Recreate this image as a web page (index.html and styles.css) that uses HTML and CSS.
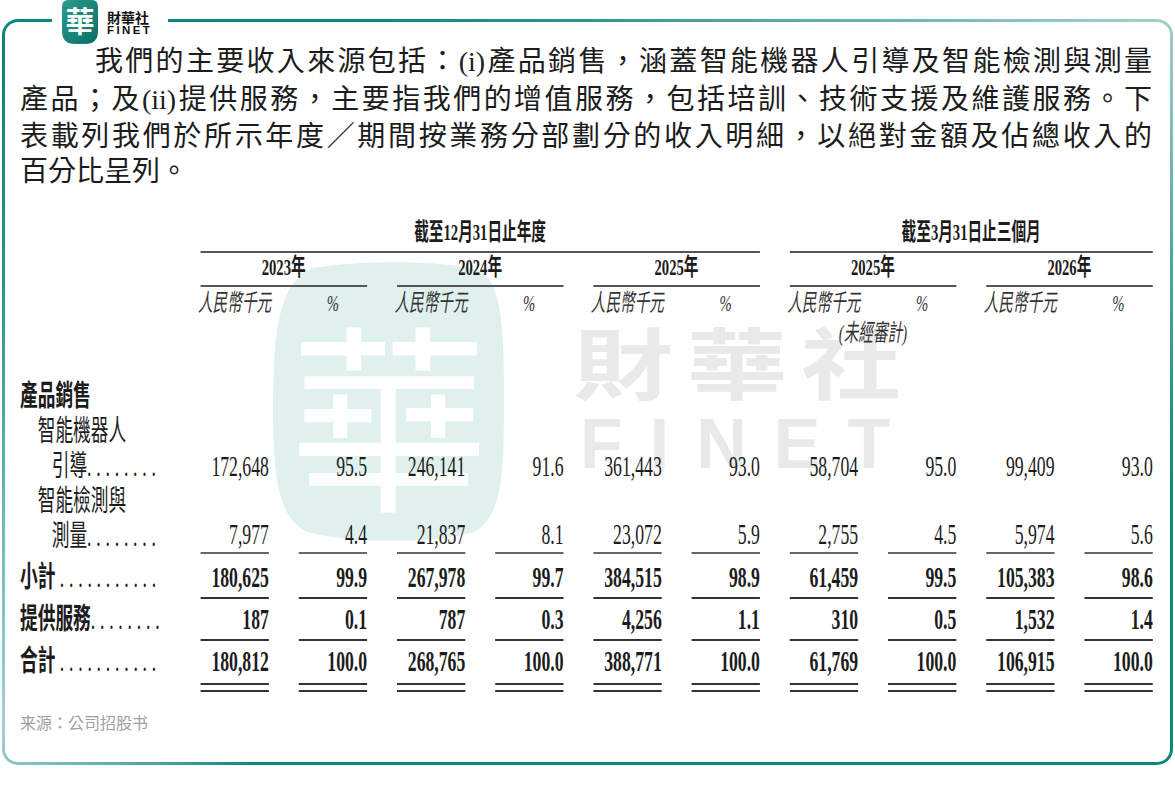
FILE: index.html
```html
<!DOCTYPE html>
<html lang="zh-Hant">
<head>
<meta charset="utf-8">
<title>收入明細</title>
<link rel="stylesheet" href="styles.css">
</head>
<body>
<div class="card">
  <div class="logo">
    <svg class="logo-mark" width="36" height="44" viewBox="0 0 36 44">
      <defs>
        <linearGradient id="lgm" x1="0" y1="0" x2="1" y2="1">
          <stop offset="0" stop-color="#2b9c90"/>
          <stop offset="1" stop-color="#0c6e65"/>
        </linearGradient>
      </defs>
      <path d="M6 0 H30 Q36 0 36 7 V31 Q36 44 23 44 H13 Q0 44 0 31 V7 Q0 0 6 0 Z" fill="url(#lgm)"/>
      <text x="18" y="33" text-anchor="middle" class="logo-glyph">華</text>
    </svg>
    <div class="logo-text">
      <span class="logo-cn">財華社</span>
      <span class="logo-en">FINET</span>
    </div>
  </div>

  <div class="wm-blob">
    <svg width="232" height="284" viewBox="0 0 232 284">
      <path d="M40 6 C90 -2 170 -2 205 8 C228 20 231 60 231 140 C231 215 228 250 205 268 C175 282 75 282 35 270 C8 258 0 225 0 150 C0 70 5 20 40 6 Z" fill="#dff0ee"/>
      <text x="116" y="234" text-anchor="middle" class="wm-glyph">華</text>
    </svg>
  </div>
  <div class="wm-cn">財華社</div>
  <div class="wm-en">FINET</div>

  <div class="intro">
    <span class="ln first">我們的主要收入來源包括：<span class="lat">(i)</span>產品銷售，涵蓋智能機器人引導及智能檢測與測量</span>
    <span class="ln">產品；及<span class="lat">(ii)</span>提供服務，主要指我們的增值服務，包括培訓、技術支援及維護服務。下</span>
    <span class="ln">表載列我們於所示年度／期間按業務分部劃分的收入明細，以絕對金額及佔總收入的</span>
    <span class="ln last">百分比呈列。</span>
  </div>

  <div class="table-wrap">
    <div class="table">
      <div class="row grp">
        <div class="h g1">截至12月31日止年度</div>
        <div class="h g2">截至3月31日止三個月</div>
      </div>
      <div class="row yrs">
        <div class="y y1">2023年</div>
        <div class="y">2024年</div>
        <div class="y">2025年</div>
        <div class="y">2025年</div>
        <div class="y">2026年</div>
      </div>
      <div class="row units">
        <div class="u u1"><span>人民幣千元</span></div><div class="u"><span>%</span></div>
        <div class="u"><span>人民幣千元</span></div><div class="u"><span>%</span></div>
        <div class="u"><span>人民幣千元</span></div><div class="u"><span>%</span></div>
        <div class="u"><span>人民幣千元</span></div><div class="u"><span>%</span></div>
        <div class="u"><span>人民幣千元</span></div><div class="u"><span>%</span></div>
      </div>
      <div class="row note">
        <div class="n">(未經審計)</div>
      </div>

      <div class="section">
        <div class="row">
          <div class="lbl b">產品銷售</div>
        </div>
        <div class="row item">
          <div class="lbl"><span class="l1">智能機器人</span><span class="l2">引導<span class="dots">........</span></span></div>
          <div class="num">172,648</div><div class="num">95.5</div>
          <div class="num">246,141</div><div class="num">91.6</div>
          <div class="num">361,443</div><div class="num">93.0</div>
          <div class="num">58,704</div><div class="num">95.0</div>
          <div class="num">99,409</div><div class="num">93.0</div>
        </div>
        <div class="row item last">
          <div class="lbl"><span class="l1">智能檢測與</span><span class="l2">測量<span class="dots">........</span></span></div>
          <div class="num">7,977</div><div class="num">4.4</div>
          <div class="num">21,837</div><div class="num">8.1</div>
          <div class="num">23,072</div><div class="num">5.9</div>
          <div class="num">2,755</div><div class="num">4.5</div>
          <div class="num">5,974</div><div class="num">5.6</div>
        </div>
        <div class="row tot sub">
          <div class="lbl b">小計 <span class="dots">...........</span></div>
          <div class="num">180,625</div><div class="num">99.9</div>
          <div class="num">267,978</div><div class="num">99.7</div>
          <div class="num">384,515</div><div class="num">98.9</div>
          <div class="num">61,459</div><div class="num">99.5</div>
          <div class="num">105,383</div><div class="num">98.6</div>
        </div>
        <div class="row tot">
          <div class="lbl b">提供服務<span class="dots">........</span></div>
          <div class="num">187</div><div class="num">0.1</div>
          <div class="num">787</div><div class="num">0.3</div>
          <div class="num">4,256</div><div class="num">1.1</div>
          <div class="num">310</div><div class="num">0.5</div>
          <div class="num">1,532</div><div class="num">1.4</div>
        </div>
        <div class="row tot grand">
          <div class="lbl b">合計 <span class="dots">...........</span></div>
          <div class="num">180,812</div><div class="num">100.0</div>
          <div class="num">268,765</div><div class="num">100.0</div>
          <div class="num">388,771</div><div class="num">100.0</div>
          <div class="num">61,769</div><div class="num">100.0</div>
          <div class="num">106,915</div><div class="num">100.0</div>
        </div>
      </div>
    </div>
  </div>

  <div class="source">来源：公司招股书</div>
</div>
</body>
</html>
```

FILE: styles.css
```css
html, body {
  margin: 0;
  padding: 0;
  background: #ffffff;
}

body {
  width: 1175px;
  height: 785px;
  overflow: hidden;
  font-family: "Noto Sans CJK TC", "Liberation Sans", sans-serif;
  color: #1c1c1c;
}

.card {
  position: relative;
  z-index: 0;
  box-sizing: border-box;
  width: 1171px;
  height: 746px;
  margin: 19px 0 0 2px;
  padding: 20px 18px 0 15px;
  border: 3px solid transparent;
  border-radius: 16px;
  background:
    linear-gradient(#ffffff, #ffffff) padding-box,
    conic-gradient(from 0deg at 50% 50%,
      #2c968d 0deg,
      #6fb5af 40deg,
      #a3cfcb 57deg,
      #58a9a2 75deg,
      #0c887e 100deg,
      #0c887e 222deg,
      #5fb0a9 232deg,
      #a2d2ce 240deg,
      #6cbab3 258deg,
      #2a968d 280deg,
      #0a867c 300deg,
      #0f8a80 330deg,
      #2c968d 360deg) border-box;
}

/* logo sitting over the top border */
.logo {
  position: absolute;
  left: 47px;
  top: -22px;
  z-index: 2;
  box-sizing: border-box;
  width: 116px;
  height: 44px;
  padding-left: 10px;
  background: #ffffff;
  display: flex;
  align-items: flex-start;
  gap: 9px;
}

.logo-mark {
  display: block;
  flex: none;
}

.logo-glyph {
  font-family: "Noto Sans CJK TC", sans-serif;
  font-weight: 700;
  font-size: 29px;
  fill: #ffffff;
}

.logo-text {
  display: flex;
  flex-direction: column;
  margin-top: 10px;
}

.logo-cn {
  font-family: "Noto Sans CJK TC", sans-serif;
  font-weight: 700;
  font-size: 14px;
  line-height: 15px;
  color: #111111;
}

.logo-en {
  font-family: "Liberation Sans", sans-serif;
  font-weight: 700;
  font-size: 11.5px;
  line-height: 11px;
  letter-spacing: 2.4px;
  color: #111111;
}

/* watermark */
.wm-blob {
  position: absolute;
  left: 268px;
  top: 240px;
  z-index: -1;
}

.wm-blob svg {
  display: block;
}

.wm-glyph {
  font-family: "Noto Sans CJK TC", sans-serif;
  font-weight: 400;
  font-size: 200px;
  fill: #ffffff;
}

.wm-cn {
  position: absolute;
  left: 568px;
  top: 299px;
  z-index: -1;
  font-family: "Noto Sans CJK TC", sans-serif;
  font-weight: 700;
  font-size: 100px;
  line-height: 100px;
  letter-spacing: 14px;
  color: #e9e9e9;
  white-space: nowrap;
  transform: scaleY(0.78);
  transform-origin: 0 0;
}

.wm-en {
  position: absolute;
  left: 575px;
  top: 387px;
  z-index: -1;
  font-family: "Liberation Sans", sans-serif;
  font-weight: 700;
  font-size: 70px;
  line-height: 70px;
  letter-spacing: 27px;
  color: #e9e9e9;
  white-space: nowrap;
}

/* intro paragraph */
.intro {
  font-size: 28px;
  line-height: 34.5px;
  color: #1c1c1c;
}

.ln {
  display: block;
  text-align: justify;
  text-align-last: justify;
}

.ln.first {
  padding-left: 75px;
}

.ln.last {
  text-align-last: left;
}

.lat {
  font-family: "Liberation Serif", serif;
}

/* table: laid out at natural width, condensed horizontally like the printed prospectus */
.table-wrap {
  margin-top: 30px;
  width: 1137px;
}

.table {
  width: 1857px;
  transform: scaleX(0.61);
  transform-origin: 0 0;
  font-family: "Liberation Serif", "Noto Sans CJK TC", serif;
  color: #1c1c1c;
}

.row {
  display: grid;
  grid-template-columns: 247px repeat(10, 112.5px);
  column-gap: 48.5px;
}

.h {
  text-align: center;
  font-size: 24px;
  font-weight: 700;
  line-height: 32px;
  padding-bottom: 3px;
  border-bottom: 2px solid #555555;
}

.g1 { grid-column: 2 / 8; }
.g2 { grid-column: 8 / 12; }

.y {
  grid-column: span 2;
  text-align: center;
  font-size: 24px;
  font-weight: 700;
  line-height: 28px;
  padding-bottom: 4px;
  border-bottom: 2px solid #555555;
}

.y1 { grid-column: 2 / span 2; }

.u {
  display: flex;
  justify-content: center;
  white-space: nowrap;
  font-size: 24px;
  font-style: italic;
  line-height: 32px;
  color: #333333;
}

.u1 { grid-column: 2; }

.n {
  grid-column: 8 / 10;
  text-align: center;
  white-space: nowrap;
  font-size: 24px;
  font-style: italic;
  line-height: 28px;
  color: #333333;
}

.section {
  margin-top: 31.5px;
  font-size: 29px;
}

.lbl {
  grid-column: 1;
  line-height: 35px;
  white-space: nowrap;
}

.lbl.b {
  font-weight: 700;
}

.l1 {
  display: block;
  padding-left: 29px;
}

.l2 {
  display: block;
  padding-left: 52px;
}

.dots {
  font-weight: 400;
  letter-spacing: 0.27em;
}

.num {
  text-align: right;
  align-self: end;
  line-height: 35px;
  white-space: nowrap;
}

.item.last .num {
  border-bottom: 2px solid #666666;
}

.tot .lbl,
.tot .num {
  padding-top: 2px;
  padding-bottom: 2px;
  line-height: 36px;
}

.tot.sub .lbl,
.tot.sub .num {
  padding-top: 5px;
}

.tot .num {
  font-weight: 700;
  border-bottom: 2px solid #333333;
}

.tot.grand .lbl,
.tot.grand .num {
  padding-bottom: 11px;
}

.tot.grand .num {
  background: linear-gradient(#333333, #333333) left bottom 5px / 100% 2px no-repeat;
}

.source {
  margin-top: 20.5px;
  font-family: "Noto Sans CJK SC", sans-serif;
  font-size: 16px;
  line-height: 20px;
  color: #a0a0a0;
}
```
